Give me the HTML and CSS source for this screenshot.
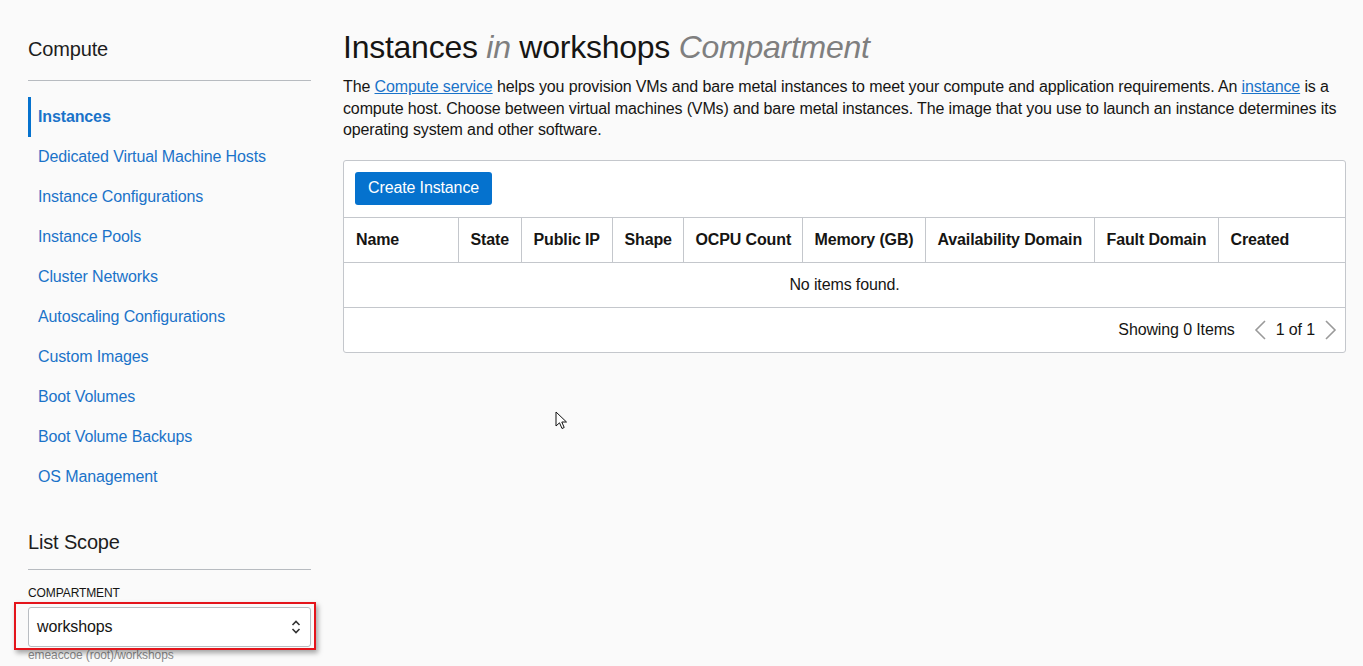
FILE: index.html
```html
<!DOCTYPE html>
<html lang="en">
<head>
<meta charset="utf-8">
<title>Instances</title>
<link rel="stylesheet" href="styles.css">
</head>
<body>
<div class="page">
  <aside class="sidebar">
    <h2 class="side-title">Compute</h2>
    <nav class="side-nav">
      <a class="nav-item active">Instances</a>
      <a class="nav-item">Dedicated Virtual Machine Hosts</a>
      <a class="nav-item">Instance Configurations</a>
      <a class="nav-item">Instance Pools</a>
      <a class="nav-item">Cluster Networks</a>
      <a class="nav-item">Autoscaling Configurations</a>
      <a class="nav-item">Custom Images</a>
      <a class="nav-item">Boot Volumes</a>
      <a class="nav-item">Boot Volume Backups</a>
      <a class="nav-item">OS Management</a>
    </nav>
    <h2 class="side-title scope">List Scope</h2>
    <div class="field-label">COMPARTMENT</div>
    <div class="select-wrap">
      <div class="select">
        <span>workshops</span>
        <svg class="updown" width="10" height="16" viewBox="0 0 10 16"><polyline points="1.5,6 5,2.5 8.5,6" fill="none" stroke="#333" stroke-width="1.6"/><polyline points="1.5,10 5,13.5 8.5,10" fill="none" stroke="#333" stroke-width="1.6"/></svg>
      </div>
      <div class="highlight"></div>
    </div>
    <div class="field-help">emeaccoe (root)/workshops</div>
  </aside>
  <main class="main">
    <h1 class="title">Instances <em>in</em> workshops <em>Compartment</em></h1>
    <p class="intro">The <a class="link">Compute service</a> helps you provision VMs and bare metal instances to meet your compute and application requirements. An <a class="link">instance</a> is a compute host. Choose between virtual machines (VMs) and bare metal instances. The image that you use to launch an instance determines its operating system and other software.</p>
    <section class="panel">
      <div class="toolbar"><button class="btn">Create Instance</button></div>
      <table class="grid">
        <thead>
          <tr>
            <th class="c-name">Name</th>
            <th class="c-state">State</th>
            <th class="c-ip">Public IP</th>
            <th class="c-shape">Shape</th>
            <th class="c-ocpu">OCPU Count</th>
            <th class="c-mem">Memory (GB)</th>
            <th class="c-ad">Availability Domain</th>
            <th class="c-fd">Fault Domain</th>
            <th class="c-created">Created</th>
          </tr>
        </thead>
        <tbody>
          <tr><td class="empty" colspan="9">No items found.</td></tr>
        </tbody>
      </table>
      <div class="footer">
        <span class="showing">Showing 0 Items</span>
        <svg class="chev" width="14" height="22" viewBox="0 0 14 22"><polyline points="12,2 3,11 12,20" fill="none" stroke="#9a9a9a" stroke-width="1.6"/></svg>
        <span class="pages">1 of 1</span>
        <svg class="chev" width="14" height="22" viewBox="0 0 14 22"><polyline points="2,2 11,11 2,20" fill="none" stroke="#9a9a9a" stroke-width="1.6"/></svg>
      </div>
    </section>
    <svg class="cursor" width="14" height="20" viewBox="0 0 14 20"><path d="M1 1 L1 15 L4.5 11.8 L7 17.5 L9.2 16.5 L6.8 11 L11.5 11 Z" fill="#fff" stroke="#111" stroke-width="1" stroke-linejoin="round"/></svg>
  </main>
</div>
</body>
</html>
```
FILE: styles.css
```css
* { box-sizing: border-box; letter-spacing: -0.008em; }
html, body { margin: 0; padding: 0; }
body {
  background: #fafafa;
  font-family: "Liberation Sans", Arial, sans-serif;
  color: #161513;
  font-size: 16px;
  width: 1363px;
  height: 666px;
  overflow: hidden;
}
.page {
  display: flex;
  gap: 32px;
  padding-left: 28px;
  padding-right: 17px;
}
.sidebar {
  width: 283px;
  flex: none;
}
.side-title {
  margin: 0;
  font-size: 20px;
  font-weight: normal;
  line-height: 24px;
  padding-top: 37px;
  padding-bottom: 19px;
  border-bottom: 1px solid #b7bbc0;
  color: #1d1d1d;
}
.side-title.scope {
  padding-top: 0;
  margin-top: 33px;
  padding-bottom: 15px;
}
.side-nav {
  display: flex;
  flex-direction: column;
  margin-top: 16px;
}
.nav-item {
  display: block;
  height: 40px;
  line-height: 40px;
  padding-left: 7px;
  color: #1a73c9;
  text-decoration: none;
  border-left: 3px solid transparent;
}
.nav-item.active {
  border-left-color: #0572ce;
  font-weight: bold;
}
.field-label {
  margin-top: 15px;
  font-size: 12px;
  line-height: 16px;
  color: #161513;
}
.select-wrap {
  position: relative;
  margin-top: 6px;
}
.select {
  height: 40px;
  border: 1px solid #b9bdc2;
  border-radius: 3px;
  background: #fff;
  display: flex;
  align-items: center;
  justify-content: space-between;
  padding: 0 9px 0 8px;
  font-size: 16px;
  color: #161513;
}
.updown { display: block; }
.highlight {
  position: absolute;
  left: -14px;
  top: -5px;
  right: -5px;
  bottom: -3px;
  border: 2.5px solid #e4141b;
  box-shadow: 2px 3px 5px rgba(0,0,0,0.35);
  pointer-events: none;
}
.field-help {
  margin-top: 0;
  font-size: 12px;
  line-height: 16px;
  color: #8a8a8a;
}
.main {
  flex: 1;
  position: relative;
  min-width: 0;
}
.title {
  margin: 0;
  padding-top: 28px;
  font-size: 32px;
  line-height: 38px;
  font-weight: normal;
  color: #161513;
}
.title em {
  color: #7f7f7f;
}
.intro {
  margin: 10px 0 0;
  line-height: 21.5px;
  font-size: 16px;
  color: #161513;
}
.link {
  color: #1a73c9;
  text-decoration: underline;
}
.panel {
  margin-top: 19px;
  background: #fff;
  border: 1px solid #c4c7cc;
  border-radius: 3px;
}
.toolbar {
  padding: 11px 11px 12px;
  border-bottom: 1px solid #c4c7cc;
}
.btn {
  height: 33px;
  padding: 0 13px;
  background: #0572ce;
  border: none;
  border-radius: 3px;
  color: #fff;
  font-family: "Liberation Sans", Arial, sans-serif;
  font-size: 16px;
}
.grid {
  width: 100%;
  border-collapse: collapse;
  table-layout: fixed;
}
.grid th {
  height: 45px;
  text-align: left;
  font-weight: bold;
  padding: 0 12px;
  border-right: 1px solid #c4c7cc;
  border-bottom: 1px solid #c4c7cc;
  white-space: nowrap;
  color: #161513;
}
.grid th:last-child { border-right: none; }
.c-name { width: 114px; }
.c-state { width: 63px; }
.c-ip { width: 91px; }
.c-shape { width: 71px; }
.c-ocpu { width: 119px; }
.c-mem { width: 123px; }
.c-ad { width: 169px; }
.c-fd { width: 124px; }
.c-created { width: auto; }
.grid td.empty {
  height: 45px;
  text-align: center;
  border-bottom: 1px solid #c4c7cc;
  color: #161513;
}
.footer {
  height: 44px;
  display: flex;
  align-items: center;
  justify-content: flex-end;
  padding-right: 7px;
  color: #161513;
}
.showing { margin-right: 18px; }
.pages { margin: 0 9px 0 9px; }
.chev { display: block; }
.cursor {
  position: absolute;
  left: 212px;
  top: 411px;
}
```
